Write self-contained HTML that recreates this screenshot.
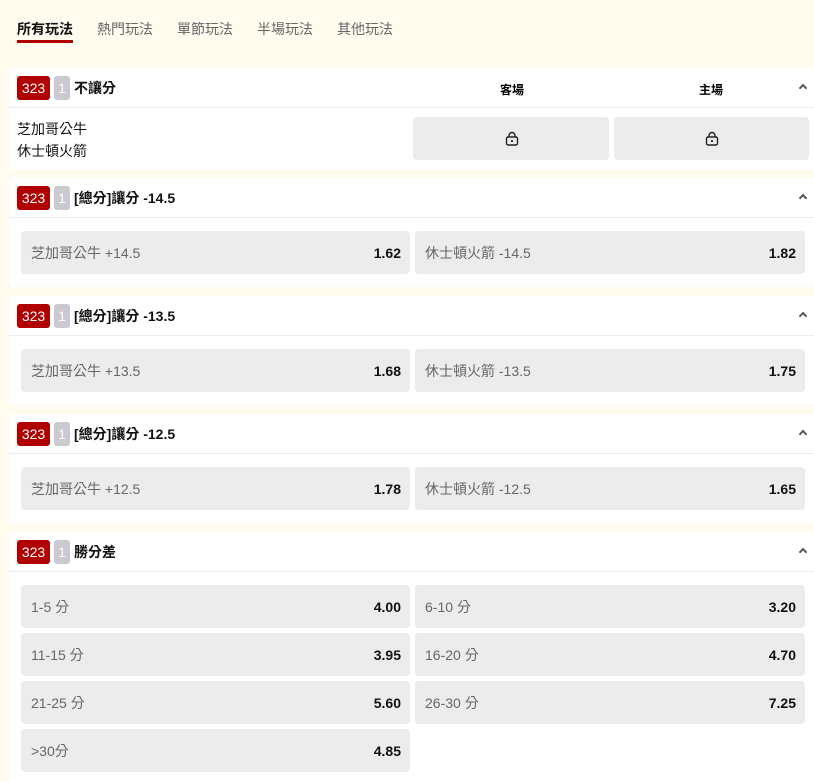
<!DOCTYPE html>
<html><head><meta charset="utf-8"><style>
*{margin:0;padding:0;box-sizing:border-box}
body{width:814px;height:777px;overflow:hidden;background:#fffbef;font-family:"Liberation Sans","Noto Sans CJK TC",sans-serif;position:relative}
.tab{position:absolute;top:19px;font-size:14px;color:#666}
.card{position:absolute;left:9px;width:810px;background:#fff;border-radius:3px}
.hd{position:absolute;left:0;right:0;top:0;height:40px;border-bottom:1px solid #ececf4}
.b1{position:absolute;left:8px;top:8px;width:33px;height:24px;background:#b00000;color:#fff;border-radius:3px;font-size:14px;text-align:center;line-height:24px}
.b2{position:absolute;left:45px;top:8px;width:16px;height:24px;background:#c9c9cf;color:#fff;border-radius:3px;font-size:14px;text-align:center;line-height:24px}
.tt{position:absolute;left:65px;top:0;height:40px;line-height:40px;font-size:14px;color:#111;font-weight:bold}
.car{position:absolute;right:13px;top:17px;width:6px;height:6px;border-left:2px solid #555;border-top:2px solid #555;transform:rotate(45deg)}
.btn{position:absolute;height:43px;background:#ececec;border-radius:4px;font-size:14px;display:flex;align-items:center;justify-content:space-between;padding:0 9px 0 10px}
.btn .l{color:#666}
.btn .r{color:#111;font-weight:bold}
</style></head><body>
<div class="tab" style="left:17px;color:#111;font-weight:bold">所有玩法</div>
<div style="position:absolute;left:17px;top:40px;width:56px;height:3px;background:#b00000"></div>
<div class="tab" style="left:97px">熱門玩法</div>
<div class="tab" style="left:177px">單節玩法</div>
<div class="tab" style="left:257px">半場玩法</div>
<div class="tab" style="left:337px">其他玩法</div>

<div class="card" style="top:68px;height:102px">
<div class="hd"><div class="b1">323</div><div class="b2">1</div><div class="tt">不讓分</div>
<div style="position:absolute;left:491px;top:13px;font-size:12px;font-weight:bold">客場</div>
<div style="position:absolute;left:690px;top:13px;font-size:12px;font-weight:bold">主場</div>
<div class="car"></div></div>
<div style="position:absolute;left:8px;top:50px;font-size:14px;line-height:22px;color:#111">芝加哥公牛<br>休士頓火箭</div>
<div class="btn" style="left:404px;top:49px;width:196px;justify-content:center"><svg width="14" height="15" viewBox="0 0 14 15"><rect x="1.5" y="6" width="11" height="8" rx="1.5" fill="none" stroke="#222" stroke-width="1.4"/><path d="M4 6V4.5a3 3 0 0 1 6 0V6" fill="none" stroke="#222" stroke-width="1.4"/><circle cx="7" cy="10" r="1.1" fill="#222"/></svg></div>
<div class="btn" style="left:605px;top:49px;width:195px;justify-content:center"><svg width="14" height="15" viewBox="0 0 14 15"><rect x="1.5" y="6" width="11" height="8" rx="1.5" fill="none" stroke="#222" stroke-width="1.4"/><path d="M4 6V4.5a3 3 0 0 1 6 0V6" fill="none" stroke="#222" stroke-width="1.4"/><circle cx="7" cy="10" r="1.1" fill="#222"/></svg></div>
</div>

<div class="card" style="top:178px;height:109px">
<div class="hd"><div class="b1">323</div><div class="b2">1</div><div class="tt">[總分]讓分 -14.5</div><div class="car"></div></div>
<div class="btn" style="left:12px;top:53px;width:389px"><span class="l">芝加哥公牛 +14.5</span><span class="r">1.62</span></div>
<div class="btn" style="left:406px;top:53px;width:390px"><span class="l">休士頓火箭 -14.5</span><span class="r">1.82</span></div>
</div>

<div class="card" style="top:296px;height:109px">
<div class="hd"><div class="b1">323</div><div class="b2">1</div><div class="tt">[總分]讓分 -13.5</div><div class="car"></div></div>
<div class="btn" style="left:12px;top:53px;width:389px"><span class="l">芝加哥公牛 +13.5</span><span class="r">1.68</span></div>
<div class="btn" style="left:406px;top:53px;width:390px"><span class="l">休士頓火箭 -13.5</span><span class="r">1.75</span></div>
</div>

<div class="card" style="top:414px;height:109px">
<div class="hd"><div class="b1">323</div><div class="b2">1</div><div class="tt">[總分]讓分 -12.5</div><div class="car"></div></div>
<div class="btn" style="left:12px;top:53px;width:389px"><span class="l">芝加哥公牛 +12.5</span><span class="r">1.78</span></div>
<div class="btn" style="left:406px;top:53px;width:390px"><span class="l">休士頓火箭 -12.5</span><span class="r">1.65</span></div>
</div>

<div class="card" style="top:532px;height:250px">
<div class="hd"><div class="b1">323</div><div class="b2">1</div><div class="tt">勝分差</div><div class="car"></div></div>
<div class="btn" style="left:12px;top:53px;width:389px"><span class="l">1-5 分</span><span class="r">4.00</span></div>
<div class="btn" style="left:406px;top:53px;width:390px"><span class="l">6-10 分</span><span class="r">3.20</span></div>
<div class="btn" style="left:12px;top:101px;width:389px"><span class="l">11-15 分</span><span class="r">3.95</span></div>
<div class="btn" style="left:406px;top:101px;width:390px"><span class="l">16-20 分</span><span class="r">4.70</span></div>
<div class="btn" style="left:12px;top:149px;width:389px"><span class="l">21-25 分</span><span class="r">5.60</span></div>
<div class="btn" style="left:406px;top:149px;width:390px"><span class="l">26-30 分</span><span class="r">7.25</span></div>
<div class="btn" style="left:12px;top:197px;width:389px"><span class="l">&gt;30分</span><span class="r">4.85</span></div>
</div>
</body></html>
